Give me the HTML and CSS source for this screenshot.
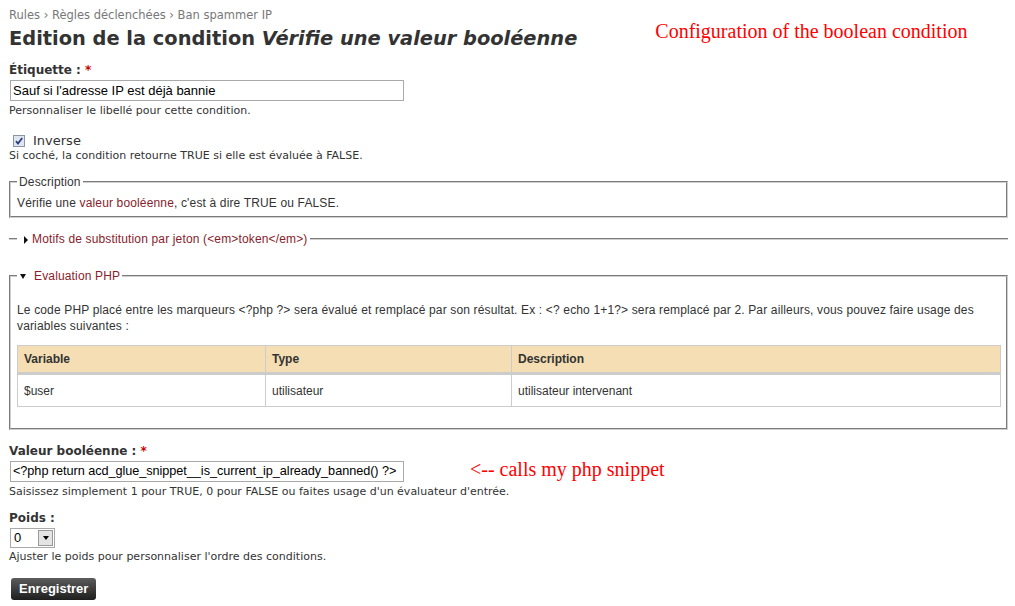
FILE: index.html
```html
<!DOCTYPE html>
<html>
<head>
<title>Edition de la condition</title>
<link rel="stylesheet" href="styles.css">
</head>
<body>
<div class="page">
<div class="breadcrumb">Rules › Règles déclenchées › Ban spammer IP</div>
<div class="title-row">
  <h1 class="title">Edition de la condition <em>Vérifie une valeur booléenne</em></h1>
  <span class="note note-title">Configuration of the boolean condition</span>
</div>

<div class="item item-first">
  <label class="label">Étiquette : <span class="req">*</span></label>
  <div class="text-input">Sauf si l'adresse IP est déjà bannie</div>
  <div class="desc">Personnaliser le libellé pour cette condition.</div>
</div>

<div class="item item-check">
  <div class="check-row">
    <span class="checkbox">
      <svg width="12" height="12" viewBox="0 0 12 12"><rect x="0.5" y="0.5" width="11" height="11" fill="#dfe6ef" stroke="#8a96a6"/><path d="M3 6.2 L5 8.6 L9.2 3" fill="none" stroke="#2b3f82" stroke-width="1.8"/></svg>
    </span>
    <span class="check-label">Inverse</span>
  </div>
  <div class="desc">Si coché, la condition retourne TRUE si elle est évaluée à FALSE.</div>
</div>

<fieldset class="box box-desc">
  <legend>Description</legend>
  <div class="box-text">Vérifie une <span class="link">valeur booléenne</span>, c'est à dire TRUE ou FALSE.</div>
</fieldset>

<fieldset class="box box-closed">
  <legend class="link"><span class="tri-right"></span>Motifs de substitution par jeton (&lt;em&gt;token&lt;/em&gt;)</legend>
</fieldset>

<fieldset class="box box-php">
  <legend class="link"><span class="tri-down"></span>Evaluation PHP</legend>
  <p class="box-para">Le code PHP placé entre les marqueurs &lt;?php ?&gt; sera évalué et remplacé par son résultat. Ex : &lt;? echo 1+1?&gt; sera remplacé par 2. Par ailleurs, vous pouvez faire usage des variables suivantes :</p>
  <table class="vars">
    <tr>
      <th class="col-var">Variable</th>
      <th class="col-type">Type</th>
      <th>Description</th>
    </tr>
    <tr>
      <td>$user</td>
      <td>utilisateur</td>
      <td>utilisateur intervenant</td>
    </tr>
  </table>
</fieldset>

<div class="item item-value">
  <label class="label">Valeur booléenne : <span class="req">*</span></label>
  <div class="input-row">
    <div class="text-input code-input">&lt;?php return acd_glue_snippet__is_current_ip_already_banned() ?&gt;</div>
    <span class="note note-input">&lt;-- calls my php snippet</span>
  </div>
  <div class="desc">Saisissez simplement 1 pour TRUE, 0 pour FALSE ou faites usage d'un évaluateur d'entrée.</div>
</div>

<div class="item item-weight">
  <label class="label">Poids :</label>
  <div class="select">
    <span class="select-value">0</span>
    <span class="select-btn"><span class="tri-small"></span></span>
  </div>
  <div class="desc">Ajuster le poids pour personnaliser l'ordre des conditions.</div>
</div>

<div class="actions">
  <span class="btn">Enregistrer</span>
</div>
</div>
</body>
</html>
```

FILE: styles.css
```css
body {
  margin: 0;
  background-color: #fff;
  color: #333;
  font-family: "DejaVu Sans", Verdana, sans-serif;
}
.page {
  padding: 7px 7px 0 9px;
}
.breadcrumb {
  font-size: 11.5px;
  line-height: 16px;
  color: #777;
}
.title-row {
  display: flex;
  align-items: flex-start;
  margin-top: 4px;
}
.title {
  margin: 0;
  font-size: 19.4px;
  line-height: 24px;
  font-weight: bold;
  color: #333;
  white-space: nowrap;
}
.note {
  font-family: "Liberation Serif", "DejaVu Serif", serif;
  color: #f00;
  font-size: 20px;
  line-height: 22px;
}
.note-title {
  margin-left: 78px;
  margin-top: -7px;
}
.item-first {
  margin-top: 11px;
}
.label {
  display: block;
  font-size: 12px;
  line-height: 16px;
  font-weight: bold;
  color: #333;
}
.req {
  color: #c00;
}
.text-input {
  box-sizing: border-box;
  width: 394px;
  height: 21px;
  margin: 2px 0 0 1px;
  padding: 0 2px;
  border: 1px solid #a9a9a9;
  font-family: "Liberation Sans", Arial, sans-serif;
  font-size: 13px;
  line-height: 19px;
  color: #000;
  white-space: nowrap;
  overflow: hidden;
}
.code-input {
  font-size: 12.7px;
  letter-spacing: -0.05px;
}
.desc {
  margin-top: 3px;
  font-size: 11px;
  line-height: 13px;
  color: #333;
}
.item-check {
  margin-top: 16px;
}
.check-row {
  display: flex;
  align-items: center;
  height: 16px;
}
.checkbox {
  display: flex;
  margin-left: 4px;
}
.check-label {
  margin-left: 8px;
  font-size: 13px;
  line-height: 16px;
}
.item-check .desc {
  margin-top: 0;
}
.box {
  margin: 0;
  padding: 0 5px 0 6px;
  border: 2px groove #cfcfcf;
  font-family: "Liberation Sans", Arial, sans-serif;
  font-size: 12px;
  letter-spacing: 0.15px;
  color: #333;
}
.box legend {
  padding: 0 2px;
  line-height: 16px;
}
.box-desc {
  margin-top: 12px;
}
.box-text {
  margin-top: 5px;
  padding-bottom: 5px;
  line-height: 16px;
}
.link {
  color: #8a1c2b;
}
.box-closed {
  margin-top: 13px;
  border-width: 2px 0 0 0;
  padding-left: 8px;
}
.box-closed legend {
  padding-left: 7px;
}
.box-php {
  margin-top: 21px;
  padding-bottom: 21px;
}
.box-php legend {
  padding-left: 3px;
}
.tri-right {
  display: inline-block;
  width: 0;
  height: 0;
  margin-right: 4px;
  border-left: 4px solid #111;
  border-top: 4px solid transparent;
  border-bottom: 4px solid transparent;
  vertical-align: -1px;
}
.tri-down {
  display: inline-block;
  width: 0;
  height: 0;
  margin-right: 8px;
  border-top: 5px solid #111;
  border-left: 3px solid transparent;
  border-right: 3px solid transparent;
  vertical-align: 1px;
}
.box-para {
  margin: 18px 0 0 0;
  line-height: 16px;
}
.vars {
  width: 100%;
  margin-top: 11px;
  border-collapse: collapse;
  border: 1px solid #ccc;
  letter-spacing: 0;
}
.vars th {
  height: 26px;
  padding: 0 6px;
  background-color: #f5deb3;
  border: 1px solid #ccc;
  border-bottom: 3px solid #ccc;
  text-align: left;
  font-weight: bold;
}
.vars td {
  height: 31px;
  padding: 0 6px;
  border: 1px solid #ccc;
}
.col-var {
  width: 235px;
}
.col-type {
  width: 233px;
}
.item-value {
  margin-top: 13px;
}
.input-row {
  display: flex;
  align-items: center;
}
.note-input {
  margin-left: 66px;
  margin-top: -4px;
}
.item-weight {
  margin-top: 12px;
}
.select {
  display: flex;
  box-sizing: border-box;
  width: 45px;
  height: 20px;
  margin: 2px 0 0 1px;
  border: 1px solid #a9a9a9;
  font-family: "Liberation Sans", Arial, sans-serif;
  font-size: 13px;
  color: #000;
}
.select-value {
  flex: 1;
  padding-left: 3px;
  line-height: 18px;
}
.select-btn {
  display: flex;
  align-items: center;
  justify-content: center;
  width: 15px;
  margin: 1px;
  background-color: #e4e4e4;
  border: 1px solid #999;
  box-sizing: border-box;
}
.tri-small {
  width: 0;
  height: 0;
  border-top: 4px solid #000;
  border-left: 3px solid transparent;
  border-right: 3px solid transparent;
}
.item-weight .desc {
  margin-top: 2px;
}
.actions {
  margin-top: 15px;
}
.btn {
  display: inline-block;
  margin-left: 2px;
  padding: 0 8px;
  height: 22px;
  line-height: 22px;
  border-radius: 3px;
  background: linear-gradient(#5c5c5c, #1e1e1e);
  color: #fff;
  font-family: "Liberation Sans", Arial, sans-serif;
  font-size: 13px;
  font-weight: bold;
  cursor: pointer;
}
```
